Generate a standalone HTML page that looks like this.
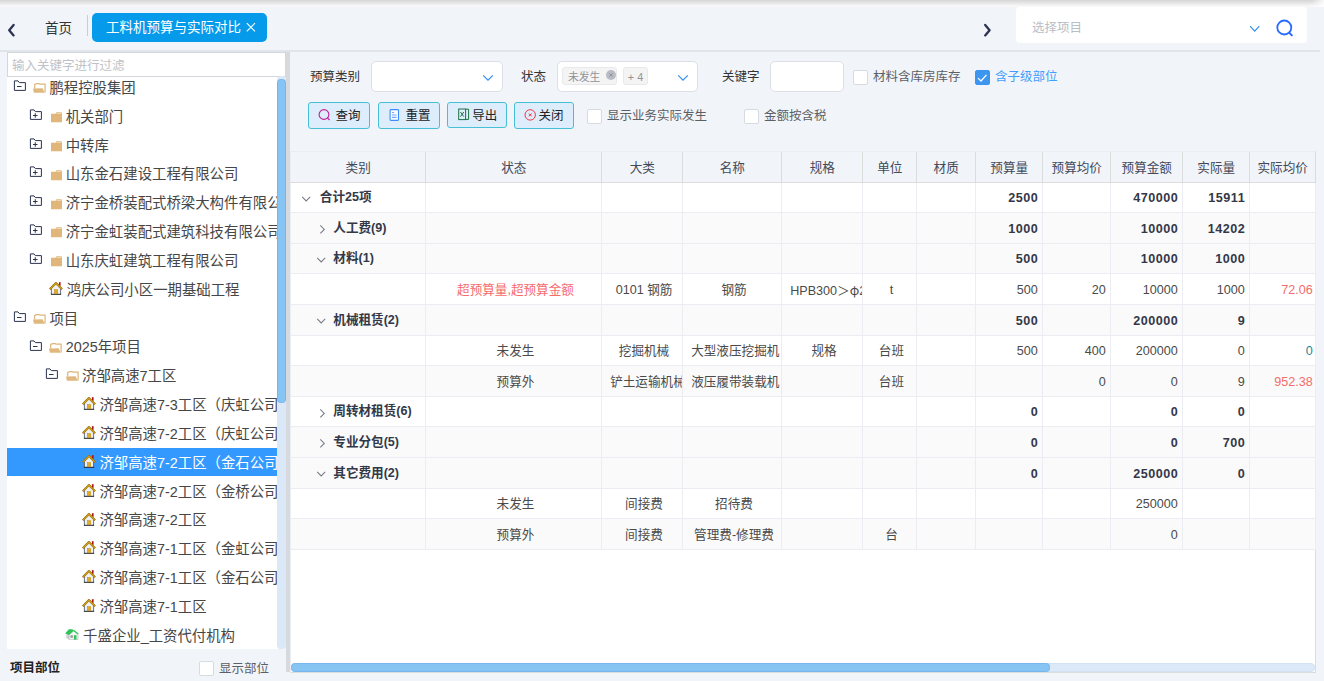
<!DOCTYPE html>
<html lang="zh-CN">
<head>
<meta charset="utf-8">
<title>工料机预算与实际对比</title>
<style>
*{box-sizing:border-box;margin:0;padding:0}
html,body{width:1324px;height:681px;overflow:hidden}
body{background:#f1f4f9;font-family:"Liberation Sans","Noto Sans CJK SC",sans-serif;color:#333;position:relative;font-size:12.5px}
.abs{position:absolute}
.topshadow{left:0;top:0;width:1324px;height:7px;background:linear-gradient(90deg,rgba(255,255,255,0) 1312px,rgba(255,255,255,.85) 1324px),linear-gradient(#d6d6d6 0,#e3e3e3 2.5px,#f2f2f2 5px,#fbfbfb 7px)}
.hdrline{left:0;top:50px;width:1320px;height:2px;background:#e0e5ec}
/* tabs */
.tab-home{left:45px;top:18.6px;font-size:13.5px;color:#333;line-height:20px}
.tab-sep{left:87px;top:15px;width:1px;height:21px;background:#cbcdd1}
.tab-act{left:92px;top:13px;width:175px;height:29px;background:#069aea;border-radius:5px;color:#fff;font-size:13.5px;line-height:30px;padding-left:14px;white-space:nowrap}
.projsel{left:1016px;top:7px;width:291px;height:36px;background:#fff;border-radius:4px}
.projsel span{position:absolute;left:16px;top:11.5px;font-size:12.5px;color:#b9bdc5;line-height:18px}
/* left */
.leftpanel{left:7px;top:52px;width:271px;height:597px;background:#fff;overflow:hidden}
.filter{left:7px;top:52px;width:279px;height:25px;border:1px solid #d4d7dc;background:#fff;font-size:12.5px;color:#bfc2c8;line-height:26px;padding-left:4px}
.tree{left:7px;top:76px;width:270px;height:573px;overflow:hidden;font-size:14.4px;color:#464646}
.tr{position:absolute;left:0;width:270px;height:29px;line-height:29px;white-space:nowrap}
.tr.sel{color:#fff}
.selbg{position:absolute;left:0;top:372px;width:270px;height:28px;background:#3399ff}
.tr span{position:absolute;top:0}
.vtrack{left:277px;top:76px;width:9px;height:573px;background:#dae8f8;border-radius:4px}
.vthumb{left:277px;top:79px;width:9px;height:324px;background:#86c4f4;border:1px solid #76b6ec;border-radius:3.5px}
.split{left:286px;top:52px;width:4px;height:620px;background:#d8d9dc}
.lfoot{left:10px;top:659px;font-size:12.5px;font-weight:bold;color:#222;line-height:18px}
.cb{position:absolute;width:14px;height:14px;border:1px solid #d7dae0;border-radius:2px;background:#fff}
.cbl{position:absolute;font-size:12.5px;color:#5c5f65;line-height:18px;white-space:nowrap;margin-top:1.3px}
/* filters */
.lab{position:absolute;font-size:12.5px;color:#333;line-height:18px;white-space:nowrap;margin-top:1.3px}
.inp{position:absolute;height:31px;border:1px solid #dcdfe6;border-radius:5px;background:#fff}
.btn{position:absolute;top:102px;height:27px;border:1px solid #45c0d6;border-radius:3px;background:#deedfb;font-size:12.5px;color:#222;line-height:27.4px;white-space:nowrap}
/* table */
.tblbg{left:290px;top:151px;width:1026px;height:522px;background:#fff;border-left:1px solid #ebeef5;border-right:1px solid #dcdcdc;border-bottom:1px solid #dcdcdc}
.tbl{left:290.3px;top:151px;width:1026px;height:511px;overflow:hidden}
.thbg{position:absolute;left:0.7px;top:0;width:1026px;height:32px;background:#f1f4f9}
.th{position:absolute;top:0;height:32px;z-index:2;border-right:1px solid #dcdcdc;border-bottom:1px solid #dcdcdc;border-top:1px solid #eaedf2;font-size:12.6px;color:#434959;text-align:center;line-height:32px;padding-left:0.6px}
.row{position:absolute;left:0;width:1026px;border-bottom:1px solid #ebedf2;font-size:12.6px;color:#4a4a4a}
.row.alt{background:linear-gradient(90deg,transparent 0.7px,#fafafa 0.7px)}
.c{position:absolute;top:0;height:100%;border-right:1px solid #ebedf2;white-space:nowrap;overflow:hidden;text-align:center;padding:1px 4.7px 0 8.7px}
.c.r{text-align:right}
.c.r.b{letter-spacing:.5px;padding-right:4.2px}
.c.last{padding-right:2.6px}
.c.l{text-align:left}
.b{font-weight:bold;color:#333848}
.red{color:#f56c6c}
.teal{color:#1a8a9a}
.hscroll{left:291px;top:663px;width:1024px;height:9px;background:#dbe9f8;border:1px solid #d2e2f3;border-radius:4px}
.hthumb{left:291px;top:663px;width:759px;height:9px;background:#86c4f4;border:1px solid #76b6ec;border-radius:3.5px}
</style>
</head>
<body>
<div class="abs topshadow"></div>
<div class="abs hdrline"></div>
<!--HEADER-->
<svg class="abs" style="left:6px;top:22px" width="12" height="16" viewBox="0 0 12 16"><path d="M7.6 3 L3.2 8.2 L7.6 13.4" fill="none" stroke="#2b3350" stroke-width="2.3" stroke-linecap="round" stroke-linejoin="round"/></svg>
<div class="abs tab-home">首页</div>
<div class="abs tab-sep"></div>
<div class="abs tab-act">工料机预算与实际对比<svg style="position:absolute;left:153px;top:8px" width="12" height="12" viewBox="0 0 12 12"><path d="M1.8 2.2 L10 10.4 M10 2.2 L1.8 10.4" stroke="#fff" stroke-width="1.1" fill="none"/></svg></div>
<svg class="abs" style="left:981px;top:22px" width="12" height="16" viewBox="0 0 12 16"><path d="M4.2 3 L8.6 8.2 L4.2 13.4" fill="none" stroke="#2b3350" stroke-width="2.3" stroke-linecap="round" stroke-linejoin="round"/></svg>
<div class="abs projsel"><span>选择项目</span>
<svg style="position:absolute;left:232px;top:16px" width="14" height="12" viewBox="0 0 14 12"><path d="M2.1 3.2 L6.7 8.2 L11.3 3.2" fill="none" stroke="#2d8cf0" stroke-width="1.1"/></svg>
<svg style="position:absolute;left:258px;top:9.7px" width="22" height="22" viewBox="0 0 22 22"><circle cx="10.3" cy="10.5" r="7" fill="none" stroke="#2a6bff" stroke-width="1.8"/><path d="M15.2 15.7 L17.9 18.4" stroke="#2a6bff" stroke-width="2" stroke-linecap="round"/></svg>
</div>
<!--/HEADER-->
<!--LEFT--><div class="abs leftpanel"></div>
<div class="abs filter">输入关键字进行过滤</div>
<div class="abs tree"><div class="selbg"></div>
<div class="tr" style="top:-2.2px"><svg style="position:absolute;left:6.0px;top:6.2px" width="14" height="12" viewBox="0 0 14 12"><path d="M1.4 0.9 H5 L6.4 2.6 H12.4 V10.4 H1.4 Z" fill="none" stroke="#2b3350" stroke-width="1"/><path d="M4 6.5 H8.5" stroke="#2b3350" stroke-width="1"/></svg><svg style="position:absolute;left:26.0px;top:9.2px" width="14" height="11" viewBox="0 0 14 11"><path d="M1.7 5.4 V1.5 L3.7 0.6 H6.2 L7 1.2 H12.1 V9.6" fill="none" stroke="#dcb57a" stroke-width="1.2"/><path d="M0 5.6 L9.6 5.2 L11.8 9.8 H0.9 Z" fill="#e0b87e"/></svg><span style="left:42.4px">鹏程控股集团</span></div>
<div class="tr" style="top:26.6px"><svg style="position:absolute;left:21.9px;top:6.2px" width="14" height="12" viewBox="0 0 14 12"><path d="M1.4 0.9 H5 L6.4 2.6 H12.4 V10.4 H1.4 Z" fill="none" stroke="#2b3350" stroke-width="1"/><path d="M4 6.5 H8.5 M6.25 4.2 V8.8" stroke="#2b3350" stroke-width="1"/></svg><svg style="position:absolute;left:43.699999999999996px;top:9.4px" width="12" height="11" viewBox="0 0 12 11"><path d="M0 1.8 H4.6 L5.4 0.3 H10.4 L11 1.8 V10.2 H0 Z" fill="#e0b67a"/><path d="M5.8 0.9 H10.2 V1.7 H5.4 Z" fill="#f3e2c4"/></svg><span style="left:58.7px">机关部门</span></div>
<div class="tr" style="top:55.5px"><svg style="position:absolute;left:21.9px;top:6.2px" width="14" height="12" viewBox="0 0 14 12"><path d="M1.4 0.9 H5 L6.4 2.6 H12.4 V10.4 H1.4 Z" fill="none" stroke="#2b3350" stroke-width="1"/><path d="M4 6.5 H8.5 M6.25 4.2 V8.8" stroke="#2b3350" stroke-width="1"/></svg><svg style="position:absolute;left:43.699999999999996px;top:9.4px" width="12" height="11" viewBox="0 0 12 11"><path d="M0 1.8 H4.6 L5.4 0.3 H10.4 L11 1.8 V10.2 H0 Z" fill="#e0b67a"/><path d="M5.8 0.9 H10.2 V1.7 H5.4 Z" fill="#f3e2c4"/></svg><span style="left:58.7px">中转库</span></div>
<div class="tr" style="top:84.3px"><svg style="position:absolute;left:21.9px;top:6.2px" width="14" height="12" viewBox="0 0 14 12"><path d="M1.4 0.9 H5 L6.4 2.6 H12.4 V10.4 H1.4 Z" fill="none" stroke="#2b3350" stroke-width="1"/><path d="M4 6.5 H8.5 M6.25 4.2 V8.8" stroke="#2b3350" stroke-width="1"/></svg><svg style="position:absolute;left:43.699999999999996px;top:9.4px" width="12" height="11" viewBox="0 0 12 11"><path d="M0 1.8 H4.6 L5.4 0.3 H10.4 L11 1.8 V10.2 H0 Z" fill="#e0b67a"/><path d="M5.8 0.9 H10.2 V1.7 H5.4 Z" fill="#f3e2c4"/></svg><span style="left:58.7px">山东金石建设工程有限公司</span></div>
<div class="tr" style="top:113.2px"><svg style="position:absolute;left:21.9px;top:6.2px" width="14" height="12" viewBox="0 0 14 12"><path d="M1.4 0.9 H5 L6.4 2.6 H12.4 V10.4 H1.4 Z" fill="none" stroke="#2b3350" stroke-width="1"/><path d="M4 6.5 H8.5 M6.25 4.2 V8.8" stroke="#2b3350" stroke-width="1"/></svg><svg style="position:absolute;left:43.699999999999996px;top:9.4px" width="12" height="11" viewBox="0 0 12 11"><path d="M0 1.8 H4.6 L5.4 0.3 H10.4 L11 1.8 V10.2 H0 Z" fill="#e0b67a"/><path d="M5.8 0.9 H10.2 V1.7 H5.4 Z" fill="#f3e2c4"/></svg><span style="left:58.7px">济宁金桥装配式桥梁大构件有限公司</span></div>
<div class="tr" style="top:142.0px"><svg style="position:absolute;left:21.9px;top:6.2px" width="14" height="12" viewBox="0 0 14 12"><path d="M1.4 0.9 H5 L6.4 2.6 H12.4 V10.4 H1.4 Z" fill="none" stroke="#2b3350" stroke-width="1"/><path d="M4 6.5 H8.5 M6.25 4.2 V8.8" stroke="#2b3350" stroke-width="1"/></svg><svg style="position:absolute;left:43.699999999999996px;top:9.4px" width="12" height="11" viewBox="0 0 12 11"><path d="M0 1.8 H4.6 L5.4 0.3 H10.4 L11 1.8 V10.2 H0 Z" fill="#e0b67a"/><path d="M5.8 0.9 H10.2 V1.7 H5.4 Z" fill="#f3e2c4"/></svg><span style="left:58.7px">济宁金虹装配式建筑科技有限公司</span></div>
<div class="tr" style="top:170.8px"><svg style="position:absolute;left:21.9px;top:6.2px" width="14" height="12" viewBox="0 0 14 12"><path d="M1.4 0.9 H5 L6.4 2.6 H12.4 V10.4 H1.4 Z" fill="none" stroke="#2b3350" stroke-width="1"/><path d="M4 6.5 H8.5 M6.25 4.2 V8.8" stroke="#2b3350" stroke-width="1"/></svg><svg style="position:absolute;left:43.699999999999996px;top:9.4px" width="12" height="11" viewBox="0 0 12 11"><path d="M0 1.8 H4.6 L5.4 0.3 H10.4 L11 1.8 V10.2 H0 Z" fill="#e0b67a"/><path d="M5.8 0.9 H10.2 V1.7 H5.4 Z" fill="#f3e2c4"/></svg><span style="left:58.7px">山东庆虹建筑工程有限公司</span></div>
<div class="tr" style="top:199.7px"><svg style="position:absolute;left:42.3px;top:6.3px" width="14" height="13" viewBox="0 0 14 13"><rect x="9.9" y="0.2" width="1.7" height="3.6" fill="#b0101a"/><path d="M2.4 6.4 L6.9 2 L11.5 6.4 V12.2 H2.4 Z" fill="#eef0f8"/><path d="M2.4 6.6 V12.2 M11.6 6.6 V12.2" stroke="#4a4f5a" stroke-width="0.8" fill="none"/><path d="M1.9 12.3 H12.1" stroke="#1a2028" stroke-width="1"/><rect x="5.4" y="7.6" width="3.3" height="4.2" fill="#e3aa22" stroke="#b98a14" stroke-width="0.5"/><path d="M0.8 7.2 L6.9 1.1 L13.1 7.2" fill="none" stroke="#8a650c" stroke-width="2.1"/><path d="M0.9 7.1 L6.9 1.2 L13 7.1" fill="none" stroke="#cf9f16" stroke-width="1.3"/></svg><span style="left:59.8px">鸿庆公司小区一期基础工程</span></div>
<div class="tr" style="top:228.5px"><svg style="position:absolute;left:6.0px;top:6.2px" width="14" height="12" viewBox="0 0 14 12"><path d="M1.4 0.9 H5 L6.4 2.6 H12.4 V10.4 H1.4 Z" fill="none" stroke="#2b3350" stroke-width="1"/><path d="M4 6.5 H8.5" stroke="#2b3350" stroke-width="1"/></svg><svg style="position:absolute;left:26.0px;top:9.2px" width="14" height="11" viewBox="0 0 14 11"><path d="M1.7 5.4 V1.5 L3.7 0.6 H6.2 L7 1.2 H12.1 V9.6" fill="none" stroke="#dcb57a" stroke-width="1.2"/><path d="M0 5.6 L9.6 5.2 L11.8 9.8 H0.9 Z" fill="#e0b87e"/></svg><span style="left:42.4px">项目</span></div>
<div class="tr" style="top:257.4px"><svg style="position:absolute;left:21.9px;top:6.2px" width="14" height="12" viewBox="0 0 14 12"><path d="M1.4 0.9 H5 L6.4 2.6 H12.4 V10.4 H1.4 Z" fill="none" stroke="#2b3350" stroke-width="1"/><path d="M4 6.5 H8.5" stroke="#2b3350" stroke-width="1"/></svg><svg style="position:absolute;left:42.3px;top:9.2px" width="14" height="11" viewBox="0 0 14 11"><path d="M1.7 5.4 V1.5 L3.7 0.6 H6.2 L7 1.2 H12.1 V9.6" fill="none" stroke="#dcb57a" stroke-width="1.2"/><path d="M0 5.6 L9.6 5.2 L11.8 9.8 H0.9 Z" fill="#e0b87e"/></svg><span style="left:58.7px">2025年项目</span></div>
<div class="tr" style="top:286.2px"><svg style="position:absolute;left:37.800000000000004px;top:6.2px" width="14" height="12" viewBox="0 0 14 12"><path d="M1.4 0.9 H5 L6.4 2.6 H12.4 V10.4 H1.4 Z" fill="none" stroke="#2b3350" stroke-width="1"/><path d="M4 6.5 H8.5" stroke="#2b3350" stroke-width="1"/></svg><svg style="position:absolute;left:58.6px;top:9.2px" width="14" height="11" viewBox="0 0 14 11"><path d="M1.7 5.4 V1.5 L3.7 0.6 H6.2 L7 1.2 H12.1 V9.6" fill="none" stroke="#dcb57a" stroke-width="1.2"/><path d="M0 5.6 L9.6 5.2 L11.8 9.8 H0.9 Z" fill="#e0b87e"/></svg><span style="left:75.0px">济邹高速7工区</span></div>
<div class="tr" style="top:315.0px"><svg style="position:absolute;left:74.9px;top:6.3px" width="14" height="13" viewBox="0 0 14 13"><rect x="9.9" y="0.2" width="1.7" height="3.6" fill="#b0101a"/><path d="M2.4 6.4 L6.9 2 L11.5 6.4 V12.2 H2.4 Z" fill="#eef0f8"/><path d="M2.4 6.6 V12.2 M11.6 6.6 V12.2" stroke="#4a4f5a" stroke-width="0.8" fill="none"/><path d="M1.9 12.3 H12.1" stroke="#1a2028" stroke-width="1"/><rect x="5.4" y="7.6" width="3.3" height="4.2" fill="#e3aa22" stroke="#b98a14" stroke-width="0.5"/><path d="M0.8 7.2 L6.9 1.1 L13.1 7.2" fill="none" stroke="#8a650c" stroke-width="2.1"/><path d="M0.9 7.1 L6.9 1.2 L13 7.1" fill="none" stroke="#cf9f16" stroke-width="1.3"/></svg><span style="left:92.4px">济邹高速7-3工区（庆虹公司）</span></div>
<div class="tr" style="top:343.9px"><svg style="position:absolute;left:74.9px;top:6.3px" width="14" height="13" viewBox="0 0 14 13"><rect x="9.9" y="0.2" width="1.7" height="3.6" fill="#b0101a"/><path d="M2.4 6.4 L6.9 2 L11.5 6.4 V12.2 H2.4 Z" fill="#eef0f8"/><path d="M2.4 6.6 V12.2 M11.6 6.6 V12.2" stroke="#4a4f5a" stroke-width="0.8" fill="none"/><path d="M1.9 12.3 H12.1" stroke="#1a2028" stroke-width="1"/><rect x="5.4" y="7.6" width="3.3" height="4.2" fill="#e3aa22" stroke="#b98a14" stroke-width="0.5"/><path d="M0.8 7.2 L6.9 1.1 L13.1 7.2" fill="none" stroke="#8a650c" stroke-width="2.1"/><path d="M0.9 7.1 L6.9 1.2 L13 7.1" fill="none" stroke="#cf9f16" stroke-width="1.3"/></svg><span style="left:92.4px">济邹高速7-2工区（庆虹公司）</span></div>
<div class="tr sel" style="top:372.7px"><svg style="position:absolute;left:74.9px;top:6.3px" width="14" height="13" viewBox="0 0 14 13"><rect x="9.9" y="0.2" width="1.7" height="3.6" fill="#b0101a"/><path d="M2.4 6.4 L6.9 2 L11.5 6.4 V12.2 H2.4 Z" fill="#eef0f8"/><path d="M2.4 6.6 V12.2 M11.6 6.6 V12.2" stroke="#4a4f5a" stroke-width="0.8" fill="none"/><path d="M1.9 12.3 H12.1" stroke="#1a2028" stroke-width="1"/><rect x="5.4" y="7.6" width="3.3" height="4.2" fill="#e3aa22" stroke="#b98a14" stroke-width="0.5"/><path d="M0.8 7.2 L6.9 1.1 L13.1 7.2" fill="none" stroke="#8a650c" stroke-width="2.1"/><path d="M0.9 7.1 L6.9 1.2 L13 7.1" fill="none" stroke="#cf9f16" stroke-width="1.3"/></svg><span style="left:92.4px">济邹高速7-2工区（金石公司）</span></div>
<div class="tr" style="top:401.6px"><svg style="position:absolute;left:74.9px;top:6.3px" width="14" height="13" viewBox="0 0 14 13"><rect x="9.9" y="0.2" width="1.7" height="3.6" fill="#b0101a"/><path d="M2.4 6.4 L6.9 2 L11.5 6.4 V12.2 H2.4 Z" fill="#eef0f8"/><path d="M2.4 6.6 V12.2 M11.6 6.6 V12.2" stroke="#4a4f5a" stroke-width="0.8" fill="none"/><path d="M1.9 12.3 H12.1" stroke="#1a2028" stroke-width="1"/><rect x="5.4" y="7.6" width="3.3" height="4.2" fill="#e3aa22" stroke="#b98a14" stroke-width="0.5"/><path d="M0.8 7.2 L6.9 1.1 L13.1 7.2" fill="none" stroke="#8a650c" stroke-width="2.1"/><path d="M0.9 7.1 L6.9 1.2 L13 7.1" fill="none" stroke="#cf9f16" stroke-width="1.3"/></svg><span style="left:92.4px">济邹高速7-2工区（金桥公司）</span></div>
<div class="tr" style="top:430.4px"><svg style="position:absolute;left:74.9px;top:6.3px" width="14" height="13" viewBox="0 0 14 13"><rect x="9.9" y="0.2" width="1.7" height="3.6" fill="#b0101a"/><path d="M2.4 6.4 L6.9 2 L11.5 6.4 V12.2 H2.4 Z" fill="#eef0f8"/><path d="M2.4 6.6 V12.2 M11.6 6.6 V12.2" stroke="#4a4f5a" stroke-width="0.8" fill="none"/><path d="M1.9 12.3 H12.1" stroke="#1a2028" stroke-width="1"/><rect x="5.4" y="7.6" width="3.3" height="4.2" fill="#e3aa22" stroke="#b98a14" stroke-width="0.5"/><path d="M0.8 7.2 L6.9 1.1 L13.1 7.2" fill="none" stroke="#8a650c" stroke-width="2.1"/><path d="M0.9 7.1 L6.9 1.2 L13 7.1" fill="none" stroke="#cf9f16" stroke-width="1.3"/></svg><span style="left:92.4px">济邹高速7-2工区</span></div>
<div class="tr" style="top:459.2px"><svg style="position:absolute;left:74.9px;top:6.3px" width="14" height="13" viewBox="0 0 14 13"><rect x="9.9" y="0.2" width="1.7" height="3.6" fill="#b0101a"/><path d="M2.4 6.4 L6.9 2 L11.5 6.4 V12.2 H2.4 Z" fill="#eef0f8"/><path d="M2.4 6.6 V12.2 M11.6 6.6 V12.2" stroke="#4a4f5a" stroke-width="0.8" fill="none"/><path d="M1.9 12.3 H12.1" stroke="#1a2028" stroke-width="1"/><rect x="5.4" y="7.6" width="3.3" height="4.2" fill="#e3aa22" stroke="#b98a14" stroke-width="0.5"/><path d="M0.8 7.2 L6.9 1.1 L13.1 7.2" fill="none" stroke="#8a650c" stroke-width="2.1"/><path d="M0.9 7.1 L6.9 1.2 L13 7.1" fill="none" stroke="#cf9f16" stroke-width="1.3"/></svg><span style="left:92.4px">济邹高速7-1工区（金虹公司）</span></div>
<div class="tr" style="top:488.1px"><svg style="position:absolute;left:74.9px;top:6.3px" width="14" height="13" viewBox="0 0 14 13"><rect x="9.9" y="0.2" width="1.7" height="3.6" fill="#b0101a"/><path d="M2.4 6.4 L6.9 2 L11.5 6.4 V12.2 H2.4 Z" fill="#eef0f8"/><path d="M2.4 6.6 V12.2 M11.6 6.6 V12.2" stroke="#4a4f5a" stroke-width="0.8" fill="none"/><path d="M1.9 12.3 H12.1" stroke="#1a2028" stroke-width="1"/><rect x="5.4" y="7.6" width="3.3" height="4.2" fill="#e3aa22" stroke="#b98a14" stroke-width="0.5"/><path d="M0.8 7.2 L6.9 1.1 L13.1 7.2" fill="none" stroke="#8a650c" stroke-width="2.1"/><path d="M0.9 7.1 L6.9 1.2 L13 7.1" fill="none" stroke="#cf9f16" stroke-width="1.3"/></svg><span style="left:92.4px">济邹高速7-1工区（金石公司）</span></div>
<div class="tr" style="top:516.9px"><svg style="position:absolute;left:74.9px;top:6.3px" width="14" height="13" viewBox="0 0 14 13"><rect x="9.9" y="0.2" width="1.7" height="3.6" fill="#b0101a"/><path d="M2.4 6.4 L6.9 2 L11.5 6.4 V12.2 H2.4 Z" fill="#eef0f8"/><path d="M2.4 6.6 V12.2 M11.6 6.6 V12.2" stroke="#4a4f5a" stroke-width="0.8" fill="none"/><path d="M1.9 12.3 H12.1" stroke="#1a2028" stroke-width="1"/><rect x="5.4" y="7.6" width="3.3" height="4.2" fill="#e3aa22" stroke="#b98a14" stroke-width="0.5"/><path d="M0.8 7.2 L6.9 1.1 L13.1 7.2" fill="none" stroke="#8a650c" stroke-width="2.1"/><path d="M0.9 7.1 L6.9 1.2 L13 7.1" fill="none" stroke="#cf9f16" stroke-width="1.3"/></svg><span style="left:92.4px">济邹高速7-1工区</span></div>
<div class="tr" style="top:545.8px"><svg style="position:absolute;left:58.4px;top:7.4px" width="14" height="11" viewBox="0 0 14 11"><path d="M1.3 4.6 L4.2 5.8 V10.8 L1.3 9 Z" fill="#d0d0d0"/><path d="M4.2 5.6 L8.8 1.8 L13 5 V10.7 H4.2 Z" fill="#f6f6f6" stroke="#aeb1b5" stroke-width="0.6"/><path d="M0.2 4.6 L3.8 0.3 H7.3 L9 1.5 L4.1 5.9 Z" fill="#2fc45a"/><path d="M8.8 1.4 L13.2 4.9" stroke="#2fc45a" stroke-width="1.3" fill="none"/><rect x="5.4" y="6.3" width="2.5" height="2.5" fill="#9a9a9a"/><rect x="8.9" y="6.2" width="2.6" height="4.4" fill="#2fc45a"/></svg><span style="left:76.1px">千盛企业_工资代付机构</span></div>
</div>
<div class="abs vtrack"></div><div class="abs vthumb"></div><div class="abs split"></div>
<div class="abs lfoot">项目部位</div><div class="cb" style="left:198.6px;top:661px;width:15px;height:15px"></div><div class="cbl" style="left:219px;top:658.6px">显示部位</div><!--/LEFT-->
<!--FILTERS-->
<div class="lab" style="left:310px;top:67px">预算类别</div>
<div class="inp" style="left:371px;top:61px;width:132px"><svg style="position:absolute;left:108.5px;top:11px" width="14" height="10" viewBox="0 0 14 10"><path d="M2.2 2.3 L7 7.1 L11.8 2.3" fill="none" stroke="#2d8cf0" stroke-width="1.1"/></svg></div>
<div class="lab" style="left:521px;top:67px">状态</div>
<div class="inp" style="left:557px;top:61px;width:141px">
 <div style="position:absolute;left:4px;top:5px;width:55px;height:18px;background:#f4f4f5;border:1px solid #e9e9eb;border-radius:3px;font-size:10.8px;color:#909399;line-height:19px;padding-left:5px">未发生<svg style="position:absolute;left:43.2px;top:2px" width="10" height="10" viewBox="0 0 10 10"><circle cx="5" cy="5" r="5" fill="#b9bcc5"/><path d="M3.3 3.3 L6.7 6.7 M6.7 3.3 L3.3 6.7" stroke="#8c919d" stroke-width="0.9"/></svg></div>
 <div style="position:absolute;left:65px;top:5px;width:25px;height:18px;background:#f4f4f5;border:1px solid #e9e9eb;border-radius:3px;font-size:10.8px;color:#909399;line-height:19px;text-align:center">+ 4</div>
 <svg style="position:absolute;left:117.5px;top:11px" width="14" height="10" viewBox="0 0 14 10"><path d="M2.2 2.3 L7 7.1 L11.8 2.3" fill="none" stroke="#2d8cf0" stroke-width="1.1"/></svg>
</div>
<div class="lab" style="left:722px;top:67px">关键字</div>
<div class="inp" style="left:770px;top:61px;width:74px"></div>
<div class="cb" style="left:853px;top:69.5px;width:15px;height:15px"></div><div class="cbl" style="left:873px;top:67px">材料含库房库存</div>
<div class="cb" style="left:975px;top:69.5px;width:15px;height:15px;background:#3c96f0;border-color:#3c96f0"><svg style="position:absolute;left:1px;top:1px" width="11" height="11" viewBox="0 0 11 11"><path d="M1 6.1 L4 9 L9.5 2.9" fill="none" stroke="#fff" stroke-width="1.3"/></svg></div><div class="cbl" style="left:995px;top:67px;color:#409eff">含子级部位</div>

<div class="btn" style="left:308px;width:62px"><svg style="position:absolute;left:8px;top:5px" width="14" height="14" viewBox="0 0 14 14"><circle cx="7" cy="6.5" r="4.9" fill="none" stroke="#bf1f9a" stroke-width="1.1"/><path d="M10.5 10 L12.6 12" stroke="#bf1f9a" stroke-width="1.1"/></svg><span style="position:absolute;left:26.5px">查询</span></div>
<div class="btn" style="left:378px;width:62px"><svg style="position:absolute;left:10px;top:6px" width="11" height="13" viewBox="0 0 11 13"><rect x="1.1" y="0.6" width="8.4" height="10.8" rx="0.8" fill="#fff" stroke="#3d8bff" stroke-width="1.1"/><path d="M3 3.6 H5.2" stroke="#6aa6ff" stroke-width="1"/><path d="M3 6 H7.6 M3 8.4 H7.6" stroke="#6aa6ff" stroke-width="1.2"/></svg><span style="position:absolute;left:26.5px">重置</span></div>
<div class="btn" style="left:447px;width:60px;height:26px"><svg style="position:absolute;left:10px;top:5px" width="12" height="13" viewBox="0 0 12 13"><path d="M7.6 1.2 H10.6 V11.4 H7.6" fill="none" stroke="#1d6f42" stroke-width="1"/><rect x="0.7" y="1" width="6.9" height="10.6" fill="none" stroke="#1d6f42" stroke-width="1"/><path d="M2.5 4 L5.8 8.6 M5.8 4 L2.5 8.6" stroke="#1d6f42" stroke-width="1"/></svg><span style="position:absolute;left:24.3px">导出</span></div>
<div class="btn" style="left:514px;width:60px"><svg style="position:absolute;left:9px;top:6px" width="13" height="13" viewBox="0 0 13 13"><circle cx="6.2" cy="5.9" r="5.2" fill="none" stroke="#f5323c" stroke-width="1"/><path d="M4.8 4.5 L7.6 7.3 M7.6 4.5 L4.8 7.3" stroke="#f5323c" stroke-width="1"/></svg><span style="position:absolute;left:23.5px">关闭</span></div>
<div class="cb" style="left:587px;top:109px;width:15px;height:15px"></div><div class="cbl" style="left:607px;top:106px">显示业务实际发生</div>
<div class="cb" style="left:744px;top:109px;width:15px;height:15px"></div><div class="cbl" style="left:764px;top:106px">金额按含税</div>
<!--/FILTERS-->
<!--TABLE--><div class="abs tblbg"></div><div class="abs tbl"><div class="thbg"></div>
<div class="th" style="left:0.0px;width:136.2px">类别</div>
<div class="th" style="left:135.2px;width:177.0px">状态</div>
<div class="th" style="left:311.2px;width:82.0px">大类</div>
<div class="th" style="left:392.2px;width:100.0px">名称</div>
<div class="th" style="left:491.2px;width:82.0px">规格</div>
<div class="th" style="left:572.2px;width:54.9px">单位</div>
<div class="th" style="left:626.1px;width:60.0px">材质</div>
<div class="th" style="left:685.1px;width:68.1px">预算量</div>
<div class="th" style="left:752.2px;width:68.9px">预算均价</div>
<div class="th" style="left:820.1px;width:73.1px">预算金额</div>
<div class="th" style="left:892.2px;width:67.9px">实际量</div>
<div class="th" style="left:959.1px;width:66.9px">实际均价</div>
<div class="row" style="top:32px;height:30px;line-height:29.6px"><div class="c b l" style="left:0.0px;width:136.2px"><svg style="position:absolute;left:10px;top:10px" width="12" height="12" viewBox="0 0 12 12"><path d="M2.2 3.9 L6.2 7.9 L10.2 3.9" fill="none" stroke="#767b86" stroke-width="1.05"/></svg><span style="position:absolute;top:0px;left:29.5px">合计25项</span></div><div class="c b" style="left:135.2px;width:177.0px"></div><div class="c b" style="left:311.2px;width:82.0px"></div><div class="c b" style="left:392.2px;width:100.0px"></div><div class="c b" style="left:491.2px;width:82.0px"></div><div class="c b" style="left:572.2px;width:54.9px"></div><div class="c b" style="left:626.1px;width:60.0px"></div><div class="c r b" style="left:685.1px;width:68.1px">2500</div><div class="c r b" style="left:752.2px;width:68.9px"></div><div class="c r b" style="left:820.1px;width:73.1px">470000</div><div class="c r b" style="left:892.2px;width:67.9px">15911</div><div class="c r b last" style="left:959.1px;width:66.9px"></div></div>
<div class="row alt" style="top:62px;height:31px;line-height:30.6px"><div class="c b l" style="left:0.0px;width:136.2px"><svg style="position:absolute;left:25px;top:10px" width="12" height="12" viewBox="0 0 12 12"><path d="M5.3 2.4 L9.3 6.4 L5.3 10.4" fill="none" stroke="#767b86" stroke-width="1.05"/></svg><span style="position:absolute;top:0px;left:43px">人工费(9)</span></div><div class="c b" style="left:135.2px;width:177.0px"></div><div class="c b" style="left:311.2px;width:82.0px"></div><div class="c b" style="left:392.2px;width:100.0px"></div><div class="c b" style="left:491.2px;width:82.0px"></div><div class="c b" style="left:572.2px;width:54.9px"></div><div class="c b" style="left:626.1px;width:60.0px"></div><div class="c r b" style="left:685.1px;width:68.1px">1000</div><div class="c r b" style="left:752.2px;width:68.9px"></div><div class="c r b" style="left:820.1px;width:73.1px">10000</div><div class="c r b" style="left:892.2px;width:67.9px">14202</div><div class="c r b last" style="left:959.1px;width:66.9px"></div></div>
<div class="row alt" style="top:93px;height:30px;line-height:29.6px"><div class="c b l" style="left:0.0px;width:136.2px"><svg style="position:absolute;left:25px;top:10px" width="12" height="12" viewBox="0 0 12 12"><path d="M2.2 3.9 L6.2 7.9 L10.2 3.9" fill="none" stroke="#767b86" stroke-width="1.05"/></svg><span style="position:absolute;top:0px;left:43px">材料(1)</span></div><div class="c b" style="left:135.2px;width:177.0px"></div><div class="c b" style="left:311.2px;width:82.0px"></div><div class="c b" style="left:392.2px;width:100.0px"></div><div class="c b" style="left:491.2px;width:82.0px"></div><div class="c b" style="left:572.2px;width:54.9px"></div><div class="c b" style="left:626.1px;width:60.0px"></div><div class="c r b" style="left:685.1px;width:68.1px">500</div><div class="c r b" style="left:752.2px;width:68.9px"></div><div class="c r b" style="left:820.1px;width:73.1px">10000</div><div class="c r b" style="left:892.2px;width:67.9px">1000</div><div class="c r b last" style="left:959.1px;width:66.9px"></div></div>
<div class="row" style="top:123px;height:31px;line-height:30.6px"><div class="c" style="left:0.0px;width:136.2px"></div><div class="c red" style="left:135.2px;width:177.0px">超预算量,超预算金额</div><div class="c" style="left:311.2px;width:82.0px">0101 钢筋</div><div class="c" style="left:392.2px;width:100.0px">钢筋</div><div class="c" style="left:491.2px;width:82.0px">HPB300＞<span style="font-family:'Noto Sans CJK SC',sans-serif">φ</span>2</div><div class="c" style="left:572.2px;width:54.9px">t</div><div class="c" style="left:626.1px;width:60.0px"></div><div class="c r" style="left:685.1px;width:68.1px">500</div><div class="c r" style="left:752.2px;width:68.9px">20</div><div class="c r" style="left:820.1px;width:73.1px">10000</div><div class="c r" style="left:892.2px;width:67.9px">1000</div><div class="c r red last" style="left:959.1px;width:66.9px">72.06</div></div>
<div class="row alt" style="top:154px;height:31px;line-height:30.6px"><div class="c b l" style="left:0.0px;width:136.2px"><svg style="position:absolute;left:25px;top:10px" width="12" height="12" viewBox="0 0 12 12"><path d="M2.2 3.9 L6.2 7.9 L10.2 3.9" fill="none" stroke="#767b86" stroke-width="1.05"/></svg><span style="position:absolute;top:0px;left:43px">机械租赁(2)</span></div><div class="c b" style="left:135.2px;width:177.0px"></div><div class="c b" style="left:311.2px;width:82.0px"></div><div class="c b" style="left:392.2px;width:100.0px"></div><div class="c b" style="left:491.2px;width:82.0px"></div><div class="c b" style="left:572.2px;width:54.9px"></div><div class="c b" style="left:626.1px;width:60.0px"></div><div class="c r b" style="left:685.1px;width:68.1px">500</div><div class="c r b" style="left:752.2px;width:68.9px"></div><div class="c r b" style="left:820.1px;width:73.1px">200000</div><div class="c r b" style="left:892.2px;width:67.9px">9</div><div class="c r b last" style="left:959.1px;width:66.9px"></div></div>
<div class="row" style="top:185px;height:30px;line-height:29.6px"><div class="c" style="left:0.0px;width:136.2px"></div><div class="c" style="left:135.2px;width:177.0px">未发生</div><div class="c" style="left:311.2px;width:82.0px">挖掘机械</div><div class="c" style="left:392.2px;width:100.0px">大型液压挖掘机</div><div class="c" style="left:491.2px;width:82.0px">规格</div><div class="c" style="left:572.2px;width:54.9px">台班</div><div class="c" style="left:626.1px;width:60.0px"></div><div class="c r" style="left:685.1px;width:68.1px">500</div><div class="c r" style="left:752.2px;width:68.9px">400</div><div class="c r" style="left:820.1px;width:73.1px">200000</div><div class="c r" style="left:892.2px;width:67.9px">0</div><div class="c r teal last" style="left:959.1px;width:66.9px">0</div></div>
<div class="row alt" style="top:215px;height:31px;line-height:30.6px"><div class="c" style="left:0.0px;width:136.2px"></div><div class="c" style="left:135.2px;width:177.0px">预算外</div><div class="c" style="left:311.2px;width:82.0px">铲土运输机械</div><div class="c" style="left:392.2px;width:100.0px">液压履带装载机</div><div class="c" style="left:491.2px;width:82.0px"></div><div class="c" style="left:572.2px;width:54.9px">台班</div><div class="c" style="left:626.1px;width:60.0px"></div><div class="c r" style="left:685.1px;width:68.1px"></div><div class="c r" style="left:752.2px;width:68.9px">0</div><div class="c r" style="left:820.1px;width:73.1px">0</div><div class="c r" style="left:892.2px;width:67.9px">9</div><div class="c r red last" style="left:959.1px;width:66.9px">952.38</div></div>
<div class="row" style="top:246px;height:30px;line-height:29.6px"><div class="c b l" style="left:0.0px;width:136.2px"><svg style="position:absolute;left:25px;top:10px" width="12" height="12" viewBox="0 0 12 12"><path d="M5.3 2.4 L9.3 6.4 L5.3 10.4" fill="none" stroke="#767b86" stroke-width="1.05"/></svg><span style="position:absolute;top:0px;left:43px">周转材租赁(6)</span></div><div class="c b" style="left:135.2px;width:177.0px"></div><div class="c b" style="left:311.2px;width:82.0px"></div><div class="c b" style="left:392.2px;width:100.0px"></div><div class="c b" style="left:491.2px;width:82.0px"></div><div class="c b" style="left:572.2px;width:54.9px"></div><div class="c b" style="left:626.1px;width:60.0px"></div><div class="c r b" style="left:685.1px;width:68.1px">0</div><div class="c r b" style="left:752.2px;width:68.9px"></div><div class="c r b" style="left:820.1px;width:73.1px">0</div><div class="c r b" style="left:892.2px;width:67.9px">0</div><div class="c r b last" style="left:959.1px;width:66.9px"></div></div>
<div class="row alt" style="top:276px;height:31px;line-height:30.6px"><div class="c b l" style="left:0.0px;width:136.2px"><svg style="position:absolute;left:25px;top:10px" width="12" height="12" viewBox="0 0 12 12"><path d="M5.3 2.4 L9.3 6.4 L5.3 10.4" fill="none" stroke="#767b86" stroke-width="1.05"/></svg><span style="position:absolute;top:0px;left:43px">专业分包(5)</span></div><div class="c b" style="left:135.2px;width:177.0px"></div><div class="c b" style="left:311.2px;width:82.0px"></div><div class="c b" style="left:392.2px;width:100.0px"></div><div class="c b" style="left:491.2px;width:82.0px"></div><div class="c b" style="left:572.2px;width:54.9px"></div><div class="c b" style="left:626.1px;width:60.0px"></div><div class="c r b" style="left:685.1px;width:68.1px">0</div><div class="c r b" style="left:752.2px;width:68.9px"></div><div class="c r b" style="left:820.1px;width:73.1px">0</div><div class="c r b" style="left:892.2px;width:67.9px">700</div><div class="c r b last" style="left:959.1px;width:66.9px"></div></div>
<div class="row alt" style="top:307px;height:31px;line-height:30.6px"><div class="c b l" style="left:0.0px;width:136.2px"><svg style="position:absolute;left:25px;top:10px" width="12" height="12" viewBox="0 0 12 12"><path d="M2.2 3.9 L6.2 7.9 L10.2 3.9" fill="none" stroke="#767b86" stroke-width="1.05"/></svg><span style="position:absolute;top:0px;left:43px">其它费用(2)</span></div><div class="c b" style="left:135.2px;width:177.0px"></div><div class="c b" style="left:311.2px;width:82.0px"></div><div class="c b" style="left:392.2px;width:100.0px"></div><div class="c b" style="left:491.2px;width:82.0px"></div><div class="c b" style="left:572.2px;width:54.9px"></div><div class="c b" style="left:626.1px;width:60.0px"></div><div class="c r b" style="left:685.1px;width:68.1px">0</div><div class="c r b" style="left:752.2px;width:68.9px"></div><div class="c r b" style="left:820.1px;width:73.1px">250000</div><div class="c r b" style="left:892.2px;width:67.9px">0</div><div class="c r b last" style="left:959.1px;width:66.9px"></div></div>
<div class="row" style="top:338px;height:30px;line-height:29.6px"><div class="c" style="left:0.0px;width:136.2px"></div><div class="c" style="left:135.2px;width:177.0px">未发生</div><div class="c" style="left:311.2px;width:82.0px">间接费</div><div class="c" style="left:392.2px;width:100.0px">招待费</div><div class="c" style="left:491.2px;width:82.0px"></div><div class="c" style="left:572.2px;width:54.9px"></div><div class="c" style="left:626.1px;width:60.0px"></div><div class="c r" style="left:685.1px;width:68.1px"></div><div class="c r" style="left:752.2px;width:68.9px"></div><div class="c r" style="left:820.1px;width:73.1px">250000</div><div class="c r" style="left:892.2px;width:67.9px"></div><div class="c r last" style="left:959.1px;width:66.9px"></div></div>
<div class="row alt" style="top:368px;height:31px;line-height:30.6px"><div class="c" style="left:0.0px;width:136.2px"></div><div class="c" style="left:135.2px;width:177.0px">预算外</div><div class="c" style="left:311.2px;width:82.0px">间接费</div><div class="c" style="left:392.2px;width:100.0px">管理费-修理费</div><div class="c" style="left:491.2px;width:82.0px"></div><div class="c" style="left:572.2px;width:54.9px">台</div><div class="c" style="left:626.1px;width:60.0px"></div><div class="c r" style="left:685.1px;width:68.1px"></div><div class="c r" style="left:752.2px;width:68.9px"></div><div class="c r" style="left:820.1px;width:73.1px">0</div><div class="c r" style="left:892.2px;width:67.9px"></div><div class="c r last" style="left:959.1px;width:66.9px"></div></div>
</div>
<div class="abs hscroll"></div><div class="abs hthumb"></div><!--/TABLE-->
</body>
</html>
